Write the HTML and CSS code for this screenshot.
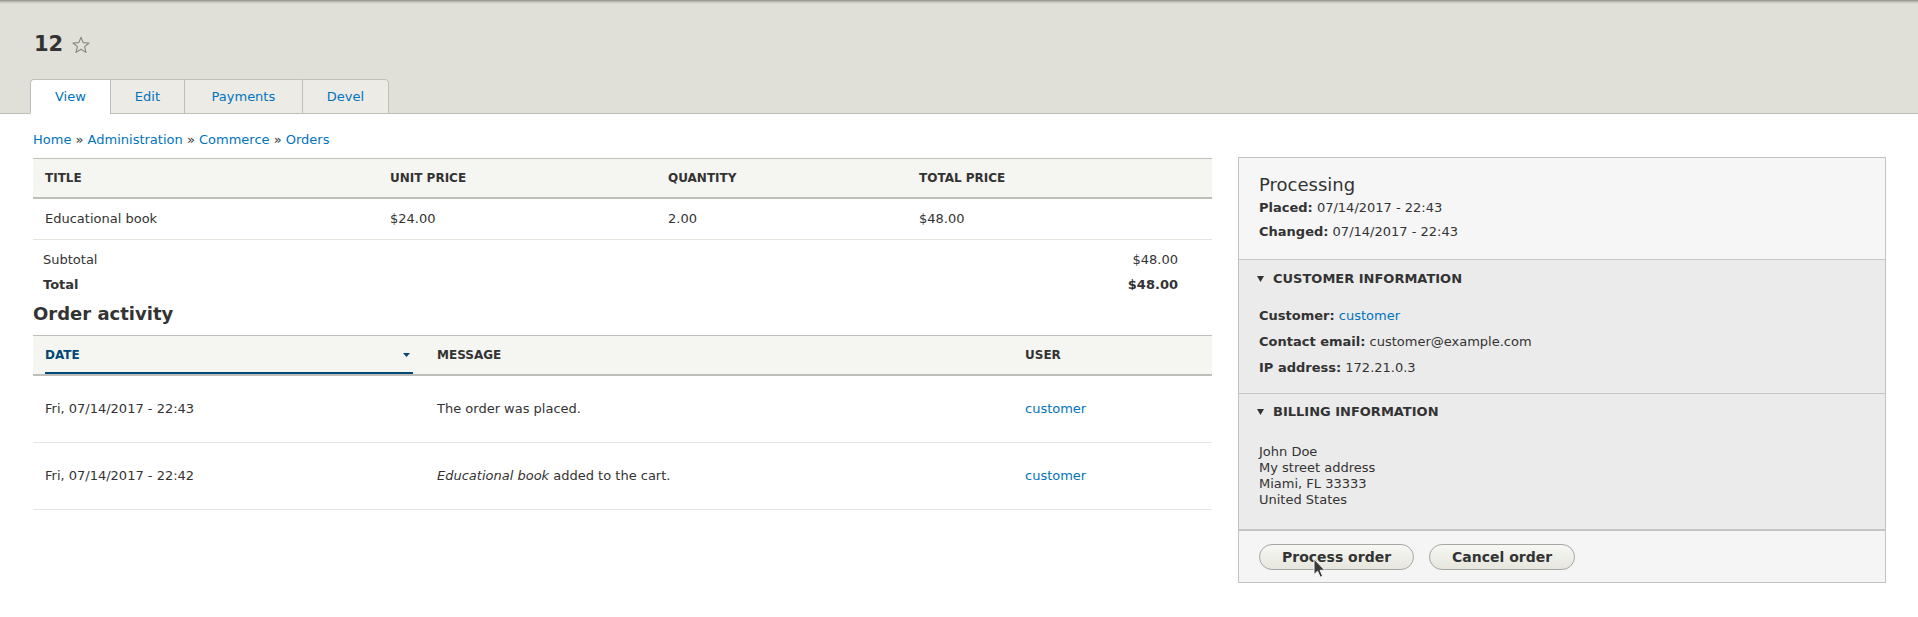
FILE: index.html
```html
<!DOCTYPE html>
<html lang="en">
<head>
<meta charset="utf-8">
<title>Order 12</title>
<link rel="stylesheet" href="styles.css">
</head>
<body>
<header class="head">
  <h1 class="page-title">12
    <svg class="star" width="18" height="18" viewBox="0 0 18 18" aria-hidden="true"><polygon points="9,1.2 11.2,6.6 17,7 12.6,10.7 14,16.4 9,13.3 4,16.4 5.4,10.7 1,7 6.8,6.6" fill="none" stroke="#85857d" stroke-width="1.1" stroke-linejoin="round"/></svg>
  </h1>
  <ul class="tabs">
    <li class="tab is-active"><a href="#">View</a></li>
    <li class="tab"><a href="#">Edit</a></li>
    <li class="tab tab-wide"><a href="#">Payments</a></li>
    <li class="tab"><a href="#">Devel</a></li>
  </ul>
</header>

<nav class="crumbs">
  <a href="#">Home</a> » <a href="#">Administration</a> » <a href="#">Commerce</a> » <a href="#">Orders</a>
</nav>

<div class="layout">
  <div class="main">
    <table class="items">
      <colgroup><col class="c1"><col class="c2"><col class="c3"><col class="c4"></colgroup>
      <thead>
        <tr><th>Title</th><th>Unit price</th><th>Quantity</th><th>Total price</th></tr>
      </thead>
      <tbody>
        <tr><td>Educational book</td><td>$24.00</td><td>2.00</td><td>$48.00</td></tr>
      </tbody>
    </table>

    <div class="totals">
      <div class="trow"><span>Subtotal</span><span>$48.00</span></div>
      <div class="trow total"><span>Total</span><span>$48.00</span></div>
    </div>

    <h2 class="section-title">Order activity</h2>

    <table class="activity">
      <colgroup><col class="a1"><col class="a2"><col class="a3"></colgroup>
      <thead>
        <tr>
          <th class="is-active"><div class="sort"><span>Date</span><svg width="7" height="4" viewBox="0 0 7 4" aria-hidden="true"><polygon points="0,0 7,0 3.5,4" fill="#004875"/></svg></div></th>
          <th>Message</th>
          <th>User</th>
        </tr>
      </thead>
      <tbody>
        <tr><td>Fri, 07/14/2017 - 22:43</td><td>The order was placed.</td><td><a href="#">customer</a></td></tr>
        <tr><td>Fri, 07/14/2017 - 22:42</td><td><em>Educational book</em> added to the cart.</td><td><a href="#">customer</a></td></tr>
      </tbody>
    </table>
  </div>

  <aside class="side">
    <div class="meta-head">
      <div class="state">Processing</div>
      <div class="meta-line"><strong>Placed:</strong> 07/14/2017 - 22:43</div>
      <div class="meta-line"><strong>Changed:</strong> 07/14/2017 - 22:43</div>
    </div>

    <div class="det">
      <div class="summary"><svg width="7" height="6" viewBox="0 0 7 6" aria-hidden="true"><polygon points="0,0 7,0 3.5,6" fill="#333"/></svg><span>Customer information</span></div>
      <div class="det-body">
        <div class="field"><strong>Customer:</strong> <a href="#">customer</a></div>
        <div class="field"><strong>Contact email:</strong> customer@example.com</div>
        <div class="field"><strong>IP address:</strong> 172.21.0.3</div>
      </div>
    </div>

    <div class="det det-last">
      <div class="summary"><svg width="7" height="6" viewBox="0 0 7 6" aria-hidden="true"><polygon points="0,0 7,0 3.5,6" fill="#333"/></svg><span>Billing information</span></div>
      <div class="address">
        <div>John Doe</div>
        <div>My street address</div>
        <div>Miami, FL 33333</div>
        <div>United States</div>
      </div>
    </div>

    <div class="actions">
      <button class="btn btn-process" type="button">Process order
        <svg class="cursor" width="13" height="21" viewBox="0 0 13 21" aria-hidden="true"><path d="M1 1 L1 16.5 L4.6 13.2 L7.2 19.2 L9.6 18.1 L7.1 12.3 L11.8 12.3 Z" fill="#3a3a3a" stroke="#f4f4f4" stroke-width="1" stroke-linejoin="round"/></svg>
      </button>
      <button class="btn" type="button">Cancel order</button>
    </div>
  </aside>
</div>
</body>
</html>
```

FILE: styles.css
```css
* { box-sizing: border-box; }

body {
  margin: 0;
  font-family: "DejaVu Sans", "Liberation Sans", sans-serif;
  font-size: 13px;
  color: #333;
  background: #fff;
}

a { color: #0074bd; text-decoration: none; }

/* Header */
.head {
  background: linear-gradient(#8c8c86 0, #c4c4bd 2px, #e0e0d8 4px, #e0e0d8 100%);
  border-bottom: 1px solid #bfbfba;
  padding: 32px 0 0 30px;
  height: 114px;
  display: flex;
  flex-direction: column;
}

.page-title {
  margin: 0 0 22px 4px;
  font-size: 21px;
  line-height: 25px;
  font-weight: bold;
  color: #333;
  display: flex;
  align-items: center;
  gap: 9px;
}

.star { display: block; }

.tabs {
  list-style: none;
  margin: 0 0 -1px 0;
  padding: 0;
  display: flex;
}

.tab {
  border: 1px solid #bfbfba;
  border-right: none;
  background: #ecebe6;
}

.tab:first-child { border-top-left-radius: 4px; }
.tab:last-child { border-right: 1px solid #bfbfba; border-top-right-radius: 4px; }

.tab.is-active {
  background: #fff;
  border-bottom-color: #fff;
}

.tab a {
  display: block;
  padding: 0 24px;
  line-height: 33px;
  font-size: 13px;
}

.tab-wide a { padding: 0 26.5px; }

/* Breadcrumb */
.crumbs {
  padding: 18px 0 9px 33px;
  line-height: 16px;
  color: #333;
}

/* Layout */
.layout {
  display: flex;
  gap: 26px;
  padding: 0 32px 0 33px;
  align-items: flex-start;
}

.main { flex: 1; min-width: 0; }

/* Tables */
table {
  width: 100%;
  border-collapse: collapse;
}

thead tr { border-top: 1px solid #bfbfba; }

th {
  background: #f5f5f2;
  border-bottom: 2px solid #bfbfba;
  padding: 12px;
  text-align: left;
  font-size: 12px;
  line-height: 14px;
  font-weight: bold;
  text-transform: uppercase;
  color: #333;
}

td {
  padding: 12px;
  line-height: 16px;
  border-bottom: 1px solid #e6e4df;
}

.items { margin-top: 1px; }
.items .c1 { width: 345px; }
.items .c2 { width: 278px; }
.items .c3 { width: 251px; }
.items .c4 { width: 305px; }

.totals { padding: 7px 34px 0 10px; }

.trow {
  display: flex;
  justify-content: space-between;
  line-height: 25px;
}

.trow.total { font-weight: bold; }

.section-title {
  margin: 6px 0 10px;
  font-size: 18px;
  line-height: 22px;
  font-weight: bold;
  color: #333;
}

.activity .a1 { width: 392px; }
.activity .a2 { width: 588px; }
.activity .a3 { width: 199px; }

.activity td { padding: 25px 12px; }

.activity th.is-active { padding-bottom: 0; color: #004875; }

.sort {
  display: flex;
  justify-content: space-between;
  align-items: center;
  padding: 0 3px 10px 0;
  border-bottom: 2px solid #004875;
}

.sort svg { display: block; }

/* Sidebar */
.side {
  width: 648px;
  flex: none;
  border: 1px solid #c2c2c2;
}

.meta-head {
  background: #f6f6f6;
  padding: 16px 20px 15px;
  border-bottom: 1px solid #c6c6c6;
}

.state { font-size: 18px; line-height: 22px; }

.meta-line { line-height: 24px; }

.det {
  background: #ebebeb;
  border-bottom: 1px solid #c6c6c6;
  padding: 11px 20px 12px 18px;
}

.det-last {
  padding: 10px 20px 21px 18px;
  border-bottom: 2px solid #c4c4c4;
}

.summary {
  display: flex;
  align-items: center;
  gap: 9px;
  line-height: 16px;
  font-weight: bold;
  text-transform: uppercase;
}

.summary svg { display: block; }

.det-body { margin-top: 16px; padding-left: 2px; }

.field { line-height: 26px; }

.address { margin-top: 24px; padding-left: 2px; line-height: 16px; }

.actions {
  background: #f5f5f5;
  padding: 13px 20px 12px;
  display: flex;
  gap: 15px;
}

.btn {
  position: relative;
  height: 26px;
  padding: 0 22px;
  border: 1px solid #a6a6a6;
  border-radius: 20em;
  background: linear-gradient(#f7f7f4, #e6e6de);
  font-family: "DejaVu Sans", "Liberation Sans", sans-serif;
  font-size: 14px;
  font-weight: bold;
  line-height: 24px;
  color: #333;
}

.cursor {
  position: absolute;
  left: 53px;
  top: 13px;
}
```
